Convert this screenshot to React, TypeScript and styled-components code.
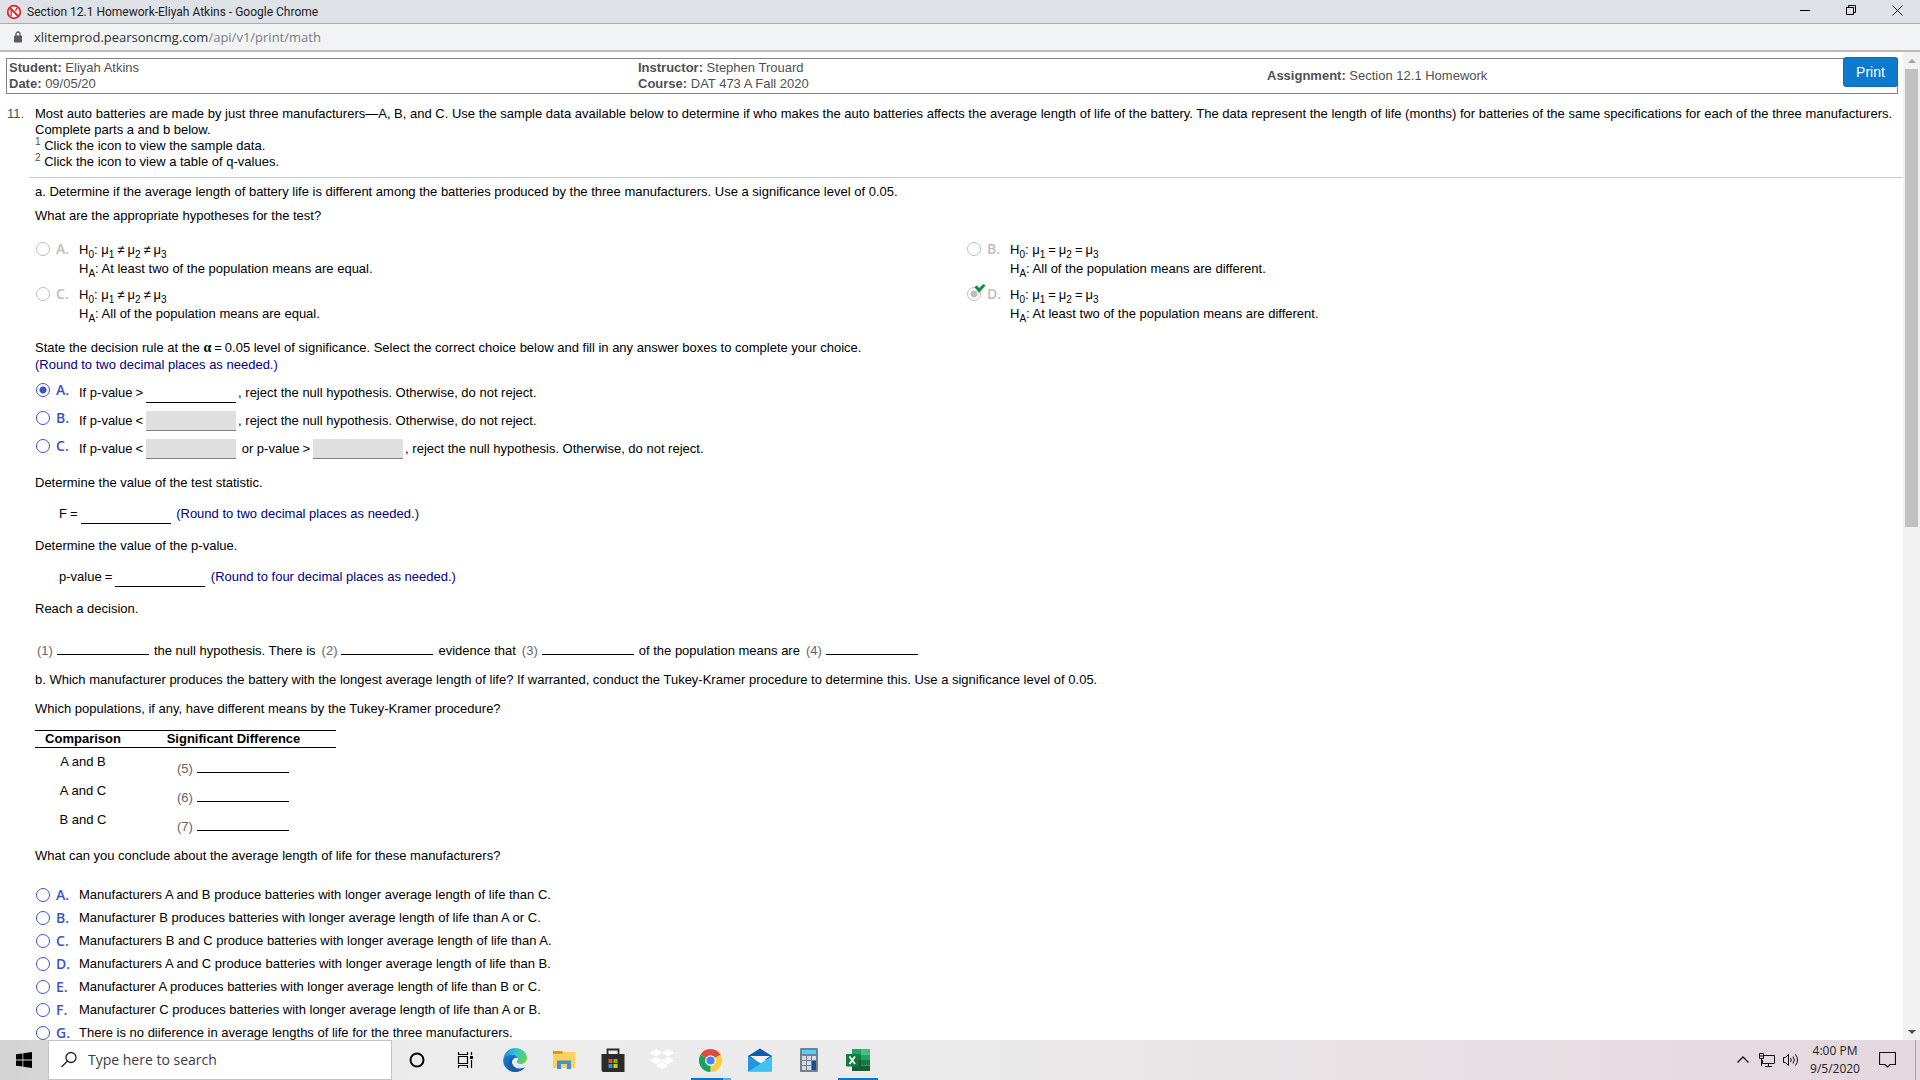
import React from "react";
import styled, { createGlobalStyle, css } from "styled-components";

const ui = `"Open Sans", "Noto Sans", sans-serif`;
const body = `"Liberation Sans", Arial, sans-serif`;
const blue = "#3a53c8";

const Global = createGlobalStyle`
  *, *::before, *::after { box-sizing: border-box; }
  body { margin: 0; background: #fff; }
  button { font: inherit; color: inherit; border: 0; padding: 0; background: none; }
`;

const Desktop = styled.div`
  height: 100vh;
  display: flex;
  flex-direction: column;
  overflow: hidden;
  font: 13px/16px ${body};
  color: #000;
`;

/* ---------- browser window ---------- */

const TitleBar = styled.header`
  display: flex;
  align-items: center;
  height: 24px;
  flex: none;
  padding-left: 6px;
  gap: 5px;
  background: #dee1e6;
  border-bottom: 1px solid #a9abae;
  font: 12px/16px Roboto, ${ui};
  color: #1c1c1c;
`;
const WindowTitle = styled.span`
  flex: 1;
`;
const WindowButtons = styled.div`
  display: flex;
  align-self: stretch;
`;
const WindowButton = styled.button`
  width: 46px;
  display: grid;
  place-items: center;
  padding-bottom: 3px;
`;
const AddressBar = styled.div`
  display: flex;
  align-items: center;
  flex: none;
  height: 28px;
  padding-left: 13px;
  gap: 11px;
  background: #f1f3f4;
  border-bottom: 2px solid #b8babc;
  font: 13px/20px ${ui};
  color: #7a7d81;
`;
const Host = styled.span`
  color: #2e3033;
`;
const Viewport = styled.div`
  flex: 1;
  min-height: 0;
  display: flex;
`;
const Page = styled.main`
  flex: 1;
  min-width: 0;
  overflow: hidden;
  padding-top: 6px;
`;
const ScrollBar = styled.div`
  width: 17px;
  flex: none;
  display: flex;
  flex-direction: column;
  background: #f1f1f1;
`;
const ScrollButton = styled.button`
  height: 17px;
  display: grid;
  place-items: center;
`;
const ScrollTrack = styled.div`
  flex: 1;
  padding: 0 2px;
`;
const ScrollThumb = styled.div`
  height: 48%;
  background: #c1c1c1;
`;

/* ---------- assignment header ---------- */

const Info = styled.section`
  position: relative;
  display: grid;
  grid-template-columns: repeat(3, 1fr);
  align-items: center;
  margin: 0 5px 0 6px;
  padding: 1px 1px 1px 2px;
  border: 1px solid #808080;
  color: #505050;
`;
const PrintButton = styled.button`
  position: absolute;
  top: -2px;
  right: -1px;
  width: 55px;
  height: 30px;
  border: 1px solid #0a6ab8;
  border-radius: 3px;
  background: #0f79cc;
  color: #fff;
  font-size: 14px;
`;

/* ---------- question ---------- */

const Question = styled.section`
  display: grid;
  grid-template-columns: 28px 1fr;
  padding: 12px 0 7px 7px;
`;
const Number = styled.span`
  color: #505050;
`;
const Sup = styled.sup`
  font-size: 10px;
  line-height: 0;
  color: #505050;
`;
const Divider = styled.hr`
  margin: 0 0 0 29px;
  border: 0;
  border-top: 1px solid #c6cad2;
`;
const Parts = styled.div`
  padding: 6px 0 0 35px;
`;
const Text = styled.p<{ $top?: number }>`
  margin: ${(p) => p.$top ?? 0}px 0 0;
`;
const Hint = styled.span`
  color: #000080;
`;
const Rule = styled(Text)`
  line-height: 17px;
`;
const Sub = styled.sub`
  font-size: 10px;
  line-height: 0;
  vertical-align: -4px;
`;
const OpMark = styled.span`
  margin: 0 3px;
`;
const Alpha = styled.span`
  font: bold 14px/0 "Liberation Serif", serif;
`;

const Hypotheses = styled.div`
  display: grid;
  grid-template-columns: 1fr 1fr;
  gap: 7px 0;
  margin: 16px 6px 16px 0;
`;
const Choices = styled.div<{ $top: number }>`
  margin-top: ${(p) => p.$top}px;
`;
const Choice = styled.div<{ $row?: number }>`
  display: flex;
  align-items: ${(p) => (p.$row ? "center" : "flex-start")};
  height: ${(p) => (p.$row ? p.$row + "px" : "auto")};
`;
const Pick = styled.label<{ $muted?: boolean; $lift?: boolean }>`
  position: relative;
  flex: none;
  width: 44px;
  padding: 0 0 ${(p) => (p.$lift ? 6 : 0)}px 1px;
  display: flex;
  align-items: center;
  gap: 6px;
  font: 600 14px/18px ${ui};
  color: ${(p) => (p.$muted ? "#bdbdbd" : blue)};
`;
const Radio = styled.input`
  appearance: none;
  flex: none;
  width: 14px;
  height: 14px;
  margin: 0;
  border: 1px solid currentColor;
  border-radius: 50%;
  color: inherit;
  &:checked {
    background: radial-gradient(circle, currentColor 0 3px, transparent 4px);
  }
`;
const Tick = styled.svg`
  position: absolute;
  left: 8px;
  top: -1px;
`;
const Statement = styled.div`
  line-height: 19px;
`;

const inputBase = css`
  appearance: none;
  padding: 0;
  border: 0;
  border-radius: 0;
  background: none;
  font: inherit;
`;
const Line = styled.div`
  display: flex;
  align-items: center;
  white-space: pre;
`;
const Field = styled.input`
  ${inputBase}
  width: 90px;
  height: 20px;
  margin-right: 2px;
  border-bottom: 1px solid #000;
  &:disabled {
    background: #dfdfdf;
    border-bottom-color: #808080;
  }
`;
const Equation = styled(Line)`
  margin: 13px 0 14px 24px;
`;
const Blanks = styled(Line)<{ $top?: number }>`
  margin-top: ${(p) => p.$top ?? 0}px;
  padding-left: 1px;
  gap: 5px;
`;
const Slot = styled.label`
  display: flex;
  align-items: center;
  gap: 4px;
  padding-left: 1px;
  color: #666;
`;
const SlotInput = styled.input`
  ${inputBase}
  align-self: flex-start;
  width: 92px;
  height: 12px;
  border-bottom: 1px solid #000;
`;

const Comparison = styled.table`
  width: 301px;
  margin-top: 13px;
  border-collapse: separate;
  border-spacing: 0;
  th {
    padding: 0;
    border: solid #000;
    border-width: 1px 0;
  }
  th:first-child {
    width: 96px;
  }
  td {
    height: 29px;
    padding: 6px 0 0;
    vertical-align: top;
    text-align: center;
  }
  td:last-child {
    padding: 13px 0 0 44px;
  }
`;

/* ---------- taskbar ---------- */

const Taskbar = styled.footer`
  flex: none;
  height: 40px;
  display: flex;
  background: linear-gradient(90deg, #d3d3d3 0, #ececec 22%, #eaeaea 50%, #e6dbe0 88%, #e4d8de 100%);
  font: 12px/18px ${ui};
  color: #1b1b1b;
`;
const Start = styled.button`
  width: 48px;
  display: grid;
  place-items: center;
`;
const Search = styled.label`
  width: 344px;
  display: flex;
  align-items: center;
  gap: 10px;
  padding-left: 11px;
  background: #fff;
  border: 1px solid #c4c4c4;
`;
const SearchInput = styled.input`
  ${inputBase}
  flex: 1;
  min-width: 0;
  outline: 0;
  font-size: 14px;
  &::placeholder {
    color: #3d3d3d;
    opacity: 1;
  }
`;
const Task = styled.button<{ $open?: "one" | "many" }>`
  width: 49px;
  display: grid;
  place-items: center;
  background: ${(p) =>
    p.$open === "many"
      ? "linear-gradient(90deg, #0078d7 80%, #62a8e2 80%) center bottom / 40px 2px no-repeat"
      : p.$open === "one"
        ? "linear-gradient(#0078d7, #0078d7) center bottom / 40px 2px no-repeat"
        : "none"};
`;
const Tray = styled.div`
  margin-left: auto;
  display: flex;
  align-items: center;
`;
const TrayButton = styled.button`
  width: 24px;
  height: 40px;
  display: grid;
  place-items: center;
`;
const Clock = styled.time`
  width: 64px;
  text-align: center;
  color: #222;
`;
const Notices = styled(TrayButton)`
  width: 40px;
`;
const ShowDesktop = styled.button`
  width: 5px;
  height: 40px;
  margin-left: 8px;
  border-left: 1px solid #ab9fa5;
`;

const Op = ({ children }: { children: string }) => <OpMark>{children}</OpMark>;

function Hypothesis({ letter, op, alt, checked }: { letter: string; op: string; alt: string; checked?: boolean }) {
  return (
    <Choice>
      <Pick $muted>
        <Radio type="radio" name="hypothesis" disabled defaultChecked={checked} />
        {letter}.
        {checked && (
          <Tick width="12" height="10" viewBox="0 0 12 10">
            <path d="M.5 3 3 1.2 5 4 9.5 0 11.5 1.6 5 9Z" fill="#0b9444" />
          </Tick>
        )}
      </Pick>
      <Statement>
        <div>
          H<Sub>0</Sub>: μ<Sub>1</Sub>
          <Op>{op}</Op>μ<Sub>2</Sub>
          <Op>{op}</Op>μ<Sub>3</Sub>
        </div>
        <div>
          H<Sub>A</Sub>: {alt}
        </div>
      </Statement>
    </Choice>
  );
}

function RuleChoice({ letter, checked, children }: { letter: string; checked?: boolean; children: React.ReactNode }) {
  return (
    <Choice $row={28}>
      <Pick $lift>
        <Radio type="radio" name="rule" defaultChecked={checked} />
        {letter}.
      </Pick>
      <Line>{children}</Line>
    </Choice>
  );
}

const Blank = ({ n }: { n: number }) => (
  <Slot>
    ({n})
    <SlotInput type="text" />
  </Slot>
);

const conclusions = [
  "Manufacturers A and B produce batteries with longer average length of life than C.",
  "Manufacturer B produces batteries with longer average length of life than A or C.",
  "Manufacturers B and C produce batteries with longer average length of life than A.",
  "Manufacturers A and C produce batteries with longer average length of life than B.",
  "Manufacturer A produces batteries with longer average length of life than B or C.",
  "Manufacturer C produces batteries with longer average length of life than A or B.",
  "There is no diiference in average lengths of life for the three manufacturers.",
];

const EdgeIcon = () => (
  <svg width="24" height="24" viewBox="0 0 24 24">
    <defs>
      <linearGradient id="edgeTop" x1="0" y1="0.3" x2="1" y2="0.5">
        <stop offset="0" stopColor="#1b8fd8" />
        <stop offset=".5" stopColor="#2fc3d6" />
        <stop offset="1" stopColor="#62d64c" />
      </linearGradient>
      <linearGradient id="edgeLow" x1="0" y1="0" x2="1" y2="1">
        <stop offset="0" stopColor="#1b7fd0" />
        <stop offset="1" stopColor="#0c4fa0" />
      </linearGradient>
    </defs>
    <path d="M.3 11C1 4.600 6 0 12.200 0 18.800 0 24 4.500 24 10c0 3.600-2.800 6-6.200 6-2.600 0-4-.9-4-1.900 0-.8 1-1.200 1-3 0-2.400-2.200-4.600-5.600-4.600C4.500 6.500 1.200 8.600.3 11Z" fill="url(#edgeTop)" />
    <path d="M.2 12C.6 8.700 4.500 6.400 8.800 6.500c3 0 5.400 1.500 5.900 3.600-3-1.300-5.800.7-5.800 4 0 3.700 3.300 6.700 7.600 6.700 2.200 0 4.200-.6 5.700-1.700C20 22.100 16.400 24 12.400 24 5.400 24 0 18.800.2 12Z" fill="url(#edgeLow)" />
    <path d="M8.900 14c0 3.700 3.300 6.800 7.600 6.800 2.200 0 4.200-.6 5.700-1.700-2.100 3-5.600 4.900-9.700 4.900C7.500 22.500 4.800 17.500 6.500 13.500 7.500 11 10.500 9 13 9.500c-2.500.4-4.100 2.300-4.100 4.500Z" fill="#155fae" />
  </svg>
);

export default function App() {
  return (
    <Desktop>
      <Global />
      <TitleBar>
        <svg width="16" height="16" viewBox="0 0 16 16" fill="none" stroke="#e32328">
          <circle cx="8" cy="8" r="6.300" strokeWidth="1.800" fill="#fff" />
          <path d="M3.500 3.500 12.500 12.500" strokeWidth="2" />
          <path d="M10.800 4 9.500 7M5.200 12V5.500" strokeWidth="1.300" />
        </svg>
        <WindowTitle>Section 12.1 Homework-Eliyah Atkins - Google Chrome</WindowTitle>
        <WindowButtons>
          <WindowButton aria-label="Minimize">
            <svg width="10" height="10" stroke="#000"><path d="M0 5.500H10" /></svg>
          </WindowButton>
          <WindowButton aria-label="Restore">
            <svg width="10" height="10" fill="none" stroke="#000"><path d="M.5 2.500H7.500V9.500H.5ZM2.500 2.500V.5H9.500V7.500H7.500" /></svg>
          </WindowButton>
          <WindowButton aria-label="Close">
            <svg width="11" height="11" stroke="#111"><path d="M.5.5 10.500 10.500M10.500.5.5 10.500" /></svg>
          </WindowButton>
        </WindowButtons>
      </TitleBar>
      <AddressBar>
        <svg width="10" height="12" viewBox="0 0 10 12">
          <rect x="1" y="4.500" width="8" height="7" rx="1" fill="#5a5d61" />
          <path d="M3 5V3a2 2 0 0 1 4 0V5" fill="none" stroke="#5a5d61" strokeWidth="1.300" />
        </svg>
        <span><Host>xlitemprod.pearsoncmg.com</Host>/api/v1/print/math</span>
      </AddressBar>

      <Viewport>
        <Page>
          <Info>
            <div>
              <div><b>Student:</b> Eliyah Atkins</div>
              <div><b>Date:</b> 09/05/20</div>
            </div>
            <div>
              <div><b>Instructor:</b> Stephen Trouard</div>
              <div><b>Course:</b> DAT 473 A Fall 2020</div>
            </div>
            <div><b>Assignment:</b> Section 12.1 Homework</div>
            <PrintButton>Print</PrintButton>
          </Info>

          <Question>
            <Number>11.</Number>
            <div>
              <Text>
                Most auto batteries are made by just three manufacturers—A, B, and C. Use the sample data available below to
                determine if who makes the auto batteries affects the average length of life of the battery. The data represent
                the length of life (months) for batteries of the same specifications for each of the three manufacturers.
                Complete parts a and b below.
              </Text>
              <Text><Sup>1</Sup> Click the icon to view the sample data.</Text>
              <Text><Sup>2</Sup> Click the icon to view a table of q-values.</Text>
            </div>
          </Question>
          <Divider />

          <Parts>
            <Text>a. Determine if the average length of battery life is different among the batteries produced by the three manufacturers. Use a significance level of 0.05.</Text>
            <Text $top={8}>What are the appropriate hypotheses for the test?</Text>
            <Hypotheses>
              <Hypothesis letter="A" op="≠" alt="At least two of the population means are equal." />
              <Hypothesis letter="B" op="=" alt="All of the population means are different." />
              <Hypothesis letter="C" op="≠" alt="All of the population means are equal." />
              <Hypothesis letter="D" op="=" alt="At least two of the population means are different." checked />
            </Hypotheses>

            <Rule>
              State the decision rule at the <Alpha>α</Alpha><Op>=</Op>0.05 level of significance. Select the correct choice below and fill in any answer boxes to complete your choice.
              <br />
              <Hint>(Round to two decimal places as needed.)</Hint>
            </Rule>
            <Choices $top={6}>
              <RuleChoice letter="A" checked>
                If p-value<Op>&gt;</Op><Field type="text" aria-label="Upper bound" />, reject the null hypothesis. Otherwise, do not reject.
              </RuleChoice>
              <RuleChoice letter="B">
                If p-value<Op>&lt;</Op><Field type="text" disabled aria-label="Lower bound" />, reject the null hypothesis. Otherwise, do not reject.
              </RuleChoice>
              <RuleChoice letter="C">
                If p-value<Op>&lt;</Op><Field type="text" disabled aria-label="Lower tail" /> or p-value<Op>&gt;</Op><Field type="text" disabled aria-label="Upper tail" />, reject the null hypothesis. Otherwise, do not reject.
              </RuleChoice>
            </Choices>

            <Text $top={12}>Determine the value of the test statistic.</Text>
            <Equation>
              F<Op>=</Op><Field type="text" aria-label="F" /><Hint> (Round to two decimal places as needed.)</Hint>
            </Equation>
            <Text>Determine the value of the p-value.</Text>
            <Equation>
              p-value<Op>=</Op><Field type="text" aria-label="p-value" /><Hint> (Round to four decimal places as needed.)</Hint>
            </Equation>
            <Text>Reach a decision.</Text>
            <Blanks $top={26}>
              <Blank n={1} />the null hypothesis. There is<Blank n={2} />evidence that<Blank n={3} />of the population means are<Blank n={4} />
            </Blanks>
            <Text $top={13}>b. Which manufacturer produces the battery with the longest average length of life? If warranted, conduct the Tukey-Kramer procedure to determine this. Use a significance level of 0.05.</Text>
            <Text $top={13}>Which populations, if any, have different means by the Tukey-Kramer procedure?</Text>

            <Comparison>
              <thead>
                <tr><th>Comparison</th><th>Significant Difference</th></tr>
              </thead>
              <tbody>
                {["A and B", "A and C", "B and C"].map((pair, i) => (
                  <tr key={pair}>
                    <td>{pair}</td>
                    <td><Blanks><Blank n={i + 5} /></Blanks></td>
                  </tr>
                ))}
              </tbody>
            </Comparison>

            <Text $top={13}>What can you conclude about the average length of life for these manufacturers?</Text>
            <Choices $top={19}>
              {conclusions.map((text, i) => (
                <Choice $row={23} key={text}>
                  <Pick htmlFor={"conclusion" + i}>
                    <Radio type="radio" name="conclusion" id={"conclusion" + i} />
                    {"ABCDEFG"[i]}.
                  </Pick>
                  <label htmlFor={"conclusion" + i}>{text}</label>
                </Choice>
              ))}
            </Choices>
          </Parts>
        </Page>
        <ScrollBar>
          <ScrollButton aria-label="Scroll up">
            <svg width="8" height="4"><path d="M4 0 8 4H0Z" fill="#a3a3a3" /></svg>
          </ScrollButton>
          <ScrollTrack><ScrollThumb /></ScrollTrack>
          <ScrollButton aria-label="Scroll down">
            <svg width="8" height="4"><path d="M4 4 8 0H0Z" fill="#505050" /></svg>
          </ScrollButton>
        </ScrollBar>
      </Viewport>

      <Taskbar>
        <Start aria-label="Start">
          <svg width="16" height="16" viewBox="0 0 16 16"><path d="M0 2.300 6.500 1.400V7.600H0ZM7.300 1.300 16 0V7.600H7.300ZM0 8.400H6.500V14.600L0 13.700ZM7.300 8.400H16V16L7.300 14.700Z" /></svg>
        </Start>
        <Search>
          <svg width="18" height="18" fill="none" stroke="#222" strokeWidth="1.300"><circle cx="11" cy="6.500" r="5" /><path d="M7.500 10 1.500 16" /></svg>
          <SearchInput type="text" placeholder="Type here to search" aria-label="Search" />
        </Search>
        <Task aria-label="Cortana">
          <svg width="16" height="16"><circle cx="8" cy="8" r="6.500" fill="none" stroke="#000" strokeWidth="2" /></svg>
        </Task>
        <Task aria-label="Task view">
          <svg width="17" height="16" fill="none" stroke="#000"><path d="M1.500 0V2.500H10.500V0M1.500 16V13.500H10.500V16M1.500 4.500H10.500V11.500H1.500ZM14.500 0V3M14.500 8V16" strokeWidth="1.200" /><path d="M13 4H16V7H13Z" fill="#000" stroke="none" /></svg>
        </Task>
        <Task aria-label="Edge"><EdgeIcon /></Task>
        <Task aria-label="File Explorer">
          <svg width="22" height="20" viewBox="0 0 22 20"><path d="M0 1H9L11 3V6H0Z" fill="#dd9d0b" /><path d="M0 4H9L10.500 2H22V18H0Z" fill="#fdd25c" /><path d="M4 19V10.500H18V19H14V14H8V19Z" fill="#3f92d6" /></svg>
        </Task>
        <Task aria-label="Store">
          <svg width="24" height="24" viewBox="0 0 24 24"><path d="M6.500 7V1.500H17.500V7" fill="none" stroke="#2a2a2a" strokeWidth="1.800" /><path d="M.5 6H23.500V24H2.500Q.5 24 .5 22Z" fill="#2b2b2b" /><path d="M7.500 11H11.500V15H7.500Z" fill="#f25022" /><path d="M12.500 11H16.500V15H12.500Z" fill="#7fba00" /><path d="M7.500 16H11.500V20H7.500Z" fill="#00a4ef" /><path d="M12.500 16H16.500V20H12.500Z" fill="#ffb900" /></svg>
        </Task>
        <Task aria-label="Dropbox">
          <svg width="24" height="22" viewBox="0 0 24 22" fill="#fff"><path d="M6 0 12 3.800 6 7.600 0 3.800ZM18 0 24 3.800 18 7.600 12 3.800ZM6 7.700 12 11.500 6 15.300 0 11.500ZM18 7.700 24 11.500 18 15.300 12 11.500ZM12 12.600 18 16.400 12 20.800 6 16.400Z" /></svg>
        </Task>
        <Task $open="many" aria-label="Chrome">
          <svg width="23" height="23" viewBox="0 0 24 24"><path d="M12 12 1.600 6A12 12 0 0 1 22.400 6Z" fill="#dd4b3e" /><path d="M12 12 22.400 6A12 12 0 0 1 12 24Z" fill="#fdcd41" /><path d="M12 12V24A12 12 0 0 1 1.600 6Z" fill="#1fa05b" /><path d="M12 6.500H22.650L22 5.400 12 5Z" fill="#dd4b3e" /><path d="M16.800 14.800 11.500 24H13L18 14Z" fill="#fdcd41" /><circle cx="12" cy="12" r="5.500" fill="#fff" /><circle cx="12" cy="12" r="4.300" fill="#4285f4" /></svg>
        </Task>
        <Task aria-label="Mail">
          <svg width="24" height="24" viewBox="0 0 24 24"><path d="M0 8 12 .5 24 8V12H0Z" fill="#0a5cab" /><path d="M3 8H21L12 16Z" fill="#fff" /><path d="M0 8 14 16 24 23.500H0Z" fill="#1d94e0" /><path d="M24 8V23.500H0Z" fill="#3fc1f5" /><path d="M0 8 12.500 15.500 0 23.500Z" fill="#2196e3" /><path d="M2 8H22L12.300 15Z" fill="#f4f4f4" /></svg>
        </Task>
        <Task aria-label="Calculator">
          <svg width="18" height="24" viewBox="0 0 18 24"><rect width="18" height="24" rx="1" fill="#75818c" /><path d="M2 2H16V6H2Z" fill="#4fd2fb" /><path d="M2 8H6V12H2ZM7 8H11V12H7ZM12 8H16V12H12ZM2 13H6V17H2ZM7 13H11V17H7ZM2 18H6V22H2ZM7 18H11V22H7Z" fill="#d4dae0" /><path d="M12 13H16V22H12Z" fill="#154f9c" /></svg>
        </Task>
        <Task $open="one" aria-label="Excel">
          <svg width="24" height="22" viewBox="0 0 24 22"><path d="M6 0H15V11H6Z" fill="#21a366" /><path d="M15 0H24V5.500H15Z" fill="#33c481" /><path d="M15 5.500H24V11H15Z" fill="#21a366" /><path d="M6 5.500H15V11H6ZM15 11H24V16.500H15Z" fill="#107c41" /><path d="M6 11H15V16.500H6ZM6 16.500H24V22H6Z" fill="#185c37" /><rect y="5" width="12.500" height="12.500" rx="1" fill="#107c41" /><path d="M3.500 7.500 9 15M9 7.500 3.500 15" stroke="#fff" strokeWidth="1.800" /></svg>
        </Task>

        <Tray>
          <TrayButton aria-label="Show hidden icons">
            <svg width="12" height="8" fill="none" stroke="#111" strokeWidth="1.300"><path d="M.5 6.500 6 1 11.500 6.500" /></svg>
          </TrayButton>
          <TrayButton aria-label="Network">
            <svg width="16" height="14" fill="none" stroke="#111"><path d="M5 2.500H15.500V10.500H3.500V7M9.500 10.500V13M6 13.500H13M.5.500H4.500V5.500H.5ZM2.500 5.500V13M1 3H4" /></svg>
          </TrayButton>
          <TrayButton aria-label="Volume">
            <svg width="16" height="14" fill="none" stroke="#111"><path d="M.5 4.500H2.500L5.500 1.500V12.500L2.500 9.500H.5ZM7.500 5Q9 7 7.500 9M10 3.500Q12.500 7 10 10.500M12.500 1.500Q16.500 7 12.500 12.500" /></svg>
          </TrayButton>
          <Clock>
            4:00 PM
            <br />
            9/5/2020
          </Clock>
          <Notices aria-label="Notifications">
            <svg width="17" height="16" fill="none" stroke="#111" strokeWidth="1.200"><path d="M.5.5H16.500V12.500H11L8.500 15 6 12.500H.5Z" /></svg>
          </Notices>
          <ShowDesktop aria-label="Show desktop" />
        </Tray>
      </Taskbar>
    </Desktop>
  );
}
